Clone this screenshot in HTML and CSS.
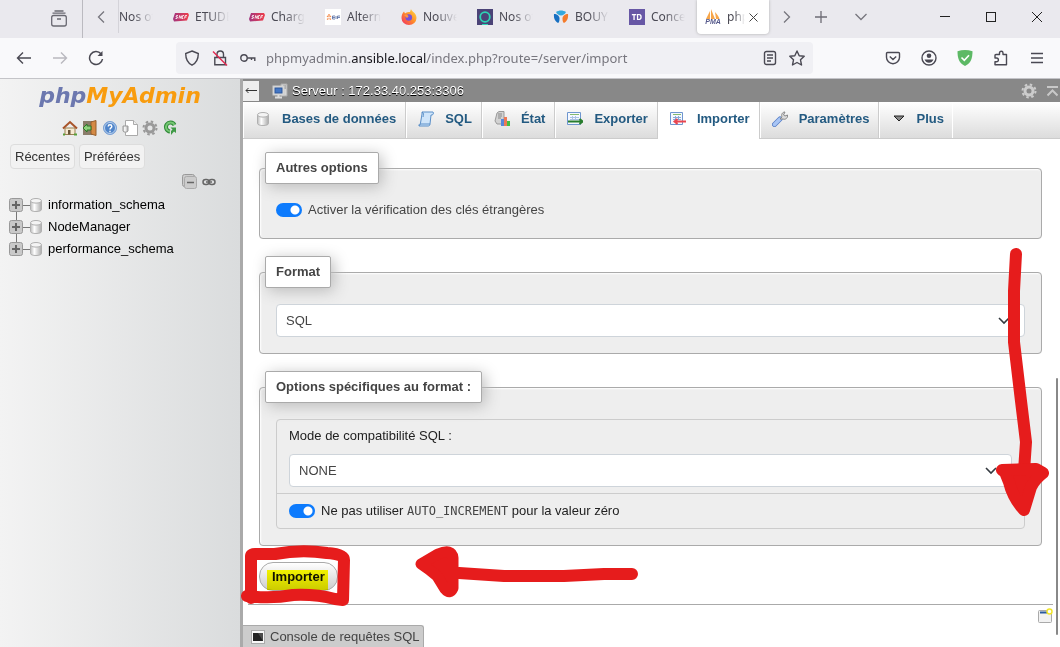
FILE: index.html
```html
<!DOCTYPE html>
<html lang="fr">
<head>
<meta charset="utf-8">
<title>phpMyAdmin</title>
<link rel="stylesheet" href="styles.css">
</head>
<body>
<svg class="defs" aria-hidden="true">
  <defs>
    <linearGradient id="sncf"><stop offset="0" stop-color="#a2357f"/><stop offset="1" stop-color="#ef3e4a"/></linearGradient>
    <linearGradient id="cyl"><stop offset="0" stop-color="#bbb"/><stop offset=".35" stop-color="#fff"/><stop offset="1" stop-color="#aaa"/></linearGradient>
    <linearGradient id="fox" x1="1" y1="0" x2="0" y2="1"><stop offset="0" stop-color="#ffe145"/><stop offset=".5" stop-color="#ff8a2a"/><stop offset="1" stop-color="#f0286a"/></linearGradient>
  </defs>
  <symbol id="i-sncf" viewBox="0 0 16 16"><path d="M2 4h13l1 2-2 5.500L1 12.500 0 10z" fill="url(#sncf)"/><path d="M5 6.500H3.500L3 8h1.500L4 9.500H2.500M6 9.500l.7-3L8 9.500l.7-3M11 6.500H9.700L9 9.500h1.300M11.500 9.500l.7-3h1.800M12 8h1.500" fill="none" stroke="#fff" stroke-width=".8"/></symbol>
  <symbol id="i-db" viewBox="0 0 16 16"><path d="M2.500 4v8.500c0 1.300 2.500 2 5.500 2s5.500-.7 5.500-2V4z" fill="url(#cyl)" stroke="#b0b0b0"/><ellipse cx="8" cy="3.800" rx="5.500" ry="2.300" fill="#f4f4f4" stroke="#b0b0b0"/></symbol>
  <symbol id="i-gear" viewBox="0 0 16 16"><circle cx="8" cy="8" r="6.500" fill="none" stroke="currentColor" stroke-width="2" stroke-dasharray="2.500 2.600"/><circle cx="8" cy="8" r="4" fill="none" stroke="currentColor" stroke-width="3"/></symbol>
  <symbol id="i-plus" viewBox="0 0 14 14"><rect x=".5" y=".5" width="13" height="13" rx="2" fill="#c9c9c9" stroke="#999"/><path d="M3 7h8M7 3v8" stroke="#666" stroke-width="2"/></symbol>
</svg>

<header class="browser">
  <div class="tabbar">
    <button class="bar-btn history" aria-label="Onglets récents"><svg width="18" height="18" viewBox="0 0 18 18" fill="none" stroke="#6a6972" stroke-width="1.300"><rect x="1.700" y="5.500" width="14.600" height="10.500" rx="2"/><path d="M2.500 3.200h13M4.500 1h9M7 9h4"/></svg></button>
    <button class="bar-btn scroll-left" aria-label="Défiler à gauche"><svg width="8" height="12" viewBox="0 0 8 12" fill="none" stroke="#77767e" stroke-width="1.300"><path d="M7 .5L1.500 6 7 11.500"/></svg></button>
    <nav class="tabs">
      <div class="tab first"><span>Nos of</span></div>
      <div class="tab"><svg width="16" height="16"><use href="#i-sncf"/></svg><span>ETUDE</span></div>
      <div class="tab"><svg width="16" height="16"><use href="#i-sncf"/></svg><span>Charg</span></div>
      <div class="tab"><svg width="16" height="16" viewBox="0 0 16 16"><rect width="16" height="16" fill="#fff"/><path d="M4 5v2M2 7l1.500 1M6 7L4.500 8M2 10.500L3.500 9.500M6 10.500L4.500 9.500" stroke="#f58a4a" stroke-width="1.300"/><path d="M7.500 7v3M7.500 7H10M7.500 8.500H10M7.500 10H10M11 7v3M12.500 7v3M12.500 7H15M12.500 8.500H15" stroke="#52689f" stroke-width=".8"/></svg><span>Altern</span></div>
      <div class="tab"><svg width="16" height="16" viewBox="0 0 16 16"><path d="M10 0c.5 2.500 5.500 4 5.500 9A7.500 7 0 0 1 .5 9C.5 6 1.500 4 3 2.500l1 2C5 3 8 3 9 3z" fill="url(#fox)"/><circle cx="7.800" cy="8.500" r="3.300" fill="#7651d8"/><path d="M3 6c3-1.500 4 0 4.500 1.500L6 9z" fill="#ff9640"/></svg><span>Nouve</span></div>
      <div class="tab"><svg width="16" height="16" viewBox="0 0 16 16"><rect width="16" height="16" fill="#4b4377"/><circle cx="8" cy="8" r="4.800" fill="none" stroke="#2dd4b4" stroke-width="1.800"/><path d="M5 15.500h6" stroke="#2dd4b4"/></svg><span>Nos of</span></div>
      <div class="tab"><svg width="16" height="16" viewBox="0 0 16 16"><path d="M3 3c3-2 7-2 10 0-1 2-3 3.500-5 3.500S4 5 3 3z" fill="#34a8dc"/><path d="M1 5c3 0 5.500 2 5.500 4.500C6.500 12 6 13.500 5 14 2 12.500.5 9 1 5z" fill="#176fc1"/><path d="M15 5c-3 0-5.500 2-5.500 4.500 0 2.500.5 4 1.500 4.500C14 12.500 15.500 9 15 5z" fill="#f47b2b"/></svg><span>BOUY</span></div>
      <div class="tab"><svg width="16" height="16" viewBox="0 0 16 16"><rect width="16" height="16" fill="#6757a5"/><text x="8" y="11" text-anchor="middle" class="fav-td">TD</text></svg><span>Conce</span></div>
      <div class="tab active"><svg width="16" height="16" viewBox="0 0 16 16"><path d="M1 10L5 2v8zM6 10V0l4 10zM10 3c2 2 4 5 4.500 7H11z" fill="#f7a64a"/><text x="8" y="15" text-anchor="middle" class="fav-pma">PMA</text></svg><span class="short">php</span><button class="close" aria-label="Fermer l'onglet"><svg width="9" height="9" viewBox="0 0 9 9" stroke="#444"><path d="M.5.5l8 8M8.500.5l-8 8"/></svg></button></div>
    </nav>
    <button class="bar-btn scroll-right" aria-label="Défiler à droite"><svg width="8" height="12" viewBox="0 0 8 12" fill="none" stroke="#77767e" stroke-width="1.300"><path d="M1 .5L6.500 6 1 11.500"/></svg></button>
    <button class="bar-btn" aria-label="Nouvel onglet"><svg width="12" height="12" viewBox="0 0 12 12" stroke="#6d6c75" stroke-width="1.300"><path d="M6 0v12M0 6h12"/></svg></button>
    <button class="bar-btn" aria-label="Lister les onglets"><svg width="12" height="8" viewBox="0 0 12 8" fill="none" stroke="#77767e" stroke-width="1.300"><path d="M.5 1L6 6.500 11.500 1"/></svg></button>
    <div class="window-controls">
      <button class="bar-btn" aria-label="Réduire"><svg width="10" height="10" viewBox="0 0 10 10" stroke="#222"><path d="M0 4.500h10"/></svg></button>
      <button class="bar-btn" aria-label="Agrandir"><svg width="10" height="10" viewBox="0 0 10 10" fill="none" stroke="#222"><rect x=".5" y=".5" width="9" height="9"/></svg></button>
      <button class="bar-btn" aria-label="Fermer"><svg width="10" height="10" viewBox="0 0 10 10" stroke="#222"><path d="M0 0l10 10M10 0L0 10"/></svg></button>
    </div>
  </div>
  <div class="toolbar">
    <div class="nav-buttons">
      <button class="bar-btn" aria-label="Page précédente"><svg width="16" height="16" viewBox="0 0 16 16" fill="none" stroke="#4a4953" stroke-width="1.400"><path d="M15 8H1.500M7 2.500L1.500 8 7 13.500"/></svg></button>
      <button class="bar-btn" aria-label="Page suivante"><svg width="16" height="16" viewBox="0 0 16 16" fill="none" stroke="#b9b8bf" stroke-width="1.400"><path d="M1 8h13.500M9 2.500L14.500 8 9 13.500"/></svg></button>
      <button class="bar-btn" aria-label="Actualiser"><svg width="16" height="16" viewBox="0 0 16 16" fill="none" stroke="#4a4953" stroke-width="1.500"><path d="M14.500 9A6.500 6.500 0 1 1 13 3.800"/><path d="M14.500 1v5h-5z" fill="#4a4953" stroke="none"/></svg></button>
    </div>
    <div class="urlbar">
      <svg width="16" height="16" viewBox="0 0 16 16" fill="none" stroke="#4a4953" stroke-width="1.400"><path d="M8 1l6.300 2.500c0 6-2 9.500-6.300 11.700C3.700 13 1.700 9.500 1.700 3.500z"/></svg>
      <svg width="16" height="16" viewBox="0 0 16 16" fill="none" stroke="#4a4953" stroke-width="1.400"><path d="M5 7V4.300a3 3 0 0 1 6.500 0V7M2.800 7.500h10.700v7.300H2.800z"/><path d="M1 1.500l14 14" stroke="#e22850"/></svg>
      <svg width="16" height="16" viewBox="0 0 16 16" fill="none" stroke="#4a4953" stroke-width="1.400"><circle cx="4" cy="8" r="3.200"/><path d="M7.200 8H15.500M11.500 8v2M14.800 8v3"/></svg>
      <div class="url">phpmyadmin.<b>ansible.local</b>/index.php?route=/server/import</div>
      <svg width="14" height="16" viewBox="0 0 14 16" fill="none" stroke="#4a4953" stroke-width="1.400"><rect x="1.500" y="1.500" width="11" height="13" rx="2"/><path d="M4 5h6M4 8h6M4 11h4"/></svg>
      <svg width="16" height="16" viewBox="0 0 16 16" fill="none" stroke="#4a4953" stroke-width="1.400"><path d="M8 1l2.200 4.700 5 .6-3.700 3.500 1 5.200L8 12.500 3.500 15l1-5.200L.8 6.300l5-.6z" stroke-linejoin="round"/></svg>
    </div>
    <div class="tools">
      <svg width="16" height="16" viewBox="0 0 16 16" fill="none" stroke="#4a4953" stroke-width="1.400"><path d="M2.500 2.500h11a1 1 0 0 1 1 1v3.700a6.500 6.500 0 0 1-13 0V3.500a1 1 0 0 1 1-1zM4.800 6.500L8 9.500l3.200-3"/></svg>
      <svg width="16" height="16" viewBox="0 0 16 16"><circle cx="8" cy="8" r="7" fill="none" stroke="#4a4953" stroke-width="1.400"/><circle cx="8" cy="5.800" r="2.300" fill="#4a4953"/><path d="M3.500 9.500h9c-.8 2-2.500 3.300-4.500 3.300S4.300 11.500 3.500 9.500z" fill="#4a4953"/></svg>
      <svg width="16" height="16" viewBox="0 0 16 16"><path d="M8 0c2.500 0 5 .4 7.500 1.300 0 7-1.500 12-7.500 14.700C2 13.300.5 8.300.5 1.300 3 .4 5.500 0 8 0z" fill="#5db965"/><path d="M4.500 7.500L7.300 10.300 12 5.200" fill="none" stroke="#fff" stroke-width="1.600"/></svg>
      <svg width="16" height="16" viewBox="0 0 16 16" fill="none" stroke="#4a4953" stroke-width="1.400"><path d="M2 8V5.500Q2 4.500 3 4.500h3.500V3a1.500 1.500 0 0 1 3.500 0v1.500h3.500v10.300H2v-3h1.500a1.800 1.800 0 0 0 0-3.800z" stroke-linejoin="round"/></svg>
      <svg width="16" height="16" viewBox="0 0 16 16" stroke="#4a4953" stroke-width="1.300"><path d="M2 3.500h12M2 8h12M2 12.500h12"/></svg>
    </div>
  </div>
</header>

<div class="page">
  <aside class="sidebar">
    <a class="logo" href="#"><span>php</span>MyAdmin</a>
    <div class="shortcuts">
      <svg width="16" height="16" viewBox="0 0 16 16"><path d="M3 8h10v6.500H3z" fill="#f6ead2" stroke="#9a8152"/><path d="M1 8.500L8 2l7 6.500" fill="none" stroke="#a8542a" stroke-width="2"/><path d="M6 10h2.500v4.500H6z" fill="#695438"/><path d="M1 14.500h2M12 14.500h3" stroke="#58a03a" stroke-width="2"/></svg>
      <svg width="16" height="16" viewBox="0 0 16 16"><path d="M1 1h9v14H1z" fill="#8a7c6a"/><path d="M9 2l5-1.500v15L9 14z" fill="#d58a45" stroke="#97602d"/><path d="M9 6v4H5v2L1 8l4-4v2z" fill="#8fd07c" stroke="#2d7827"/></svg>
      <svg width="16" height="16" viewBox="0 0 16 16"><circle cx="8" cy="8" r="6.500" fill="#5085ca" stroke="#7ba2d6"/><circle cx="8" cy="8" r="5.500" fill="none" stroke="#dce8f7" stroke-width=".8"/><path d="M6.200 6.500c0-2.300 3.600-2.300 3.600 0C9.800 8 8 7.800 8 9.500M8 10.800v1.400" fill="none" stroke="#fff" stroke-width="1.400"/></svg>
      <svg width="16" height="16" viewBox="0 0 16 16"><path d="M3.500.5h8l4 4v11h-12z" fill="#fff" stroke="#aaa"/><path d="M11.500.5v4h4" fill="#eee" stroke="#aaa"/><path d="M1 6v5c0 1.500 5 1.500 5 0V6z" fill="url(#cyl)" stroke="#999"/></svg>
      <svg width="16" height="16" class="gear-dark"><use href="#i-gear"/></svg>
      <svg width="16" height="16" viewBox="0 0 16 16"><path d="M12.500 5A4.500 4.500 0 1 0 8 11.500" fill="none" stroke="#328b3b" stroke-width="4"/><path d="M12.500 5A4.500 4.500 0 1 0 8 11.500" fill="none" stroke="#75c673" stroke-width="2"/><path d="M8.500 7.500H14V13l-2-1.500L9 15v-4l1.500-1.500z" fill="#3f9a46"/></svg>
    </div>
    <div class="side-buttons"><button>Récentes</button><button>Préférées</button></div>
    <div class="tree-tools">
      <svg width="15" height="15" viewBox="0 0 15 15"><rect x=".5" y=".5" width="12" height="12" rx="2" fill="#ccc" stroke="#999"/><rect x="2.500" y="2.500" width="12" height="12" rx="2" fill="#ccc" stroke="#aaa"/><path d="M5 8.500h7" stroke="#666" stroke-width="1.500"/></svg>
      <svg width="14" height="8" viewBox="0 0 14 8" fill="none" stroke="#666" stroke-width="1.500"><rect x="1" y="1.500" width="6" height="5" rx="2.500"/><rect x="7" y="1.500" width="6" height="5" rx="2.500"/><path d="M4 4h6"/></svg>
    </div>
    <ul class="tree">
      <li><svg class="expand" width="14" height="14"><use href="#i-plus"/></svg><svg width="16" height="16"><use href="#i-db"/></svg><a href="#">information_schema</a></li>
      <li><svg class="expand" width="14" height="14"><use href="#i-plus"/></svg><svg width="16" height="16"><use href="#i-db"/></svg><a href="#">NodeManager</a></li>
      <li><svg class="expand" width="14" height="14"><use href="#i-plus"/></svg><svg width="16" height="16"><use href="#i-db"/></svg><a href="#">performance_schema</a></li>
    </ul>
  </aside>

  <main class="main">
    <div class="server-bar">
      <button class="collapse" aria-label="Masquer le panneau"><svg width="12" height="7" viewBox="0 0 12 7" fill="none" stroke="#333"><path d="M12 3.500H1M3.500 1L1 3.500 3.500 6"/></svg></button>
      <svg width="16" height="16" viewBox="0 0 16 16"><path d="M9 1h6v12H9z" fill="#d6d6d6" stroke="#aaa"/><path d="M11 3h3M11 5h3" stroke="#888"/><rect x="1" y="3" width="11" height="9" fill="#ddd" stroke="#ccc"/><rect x="3" y="5" width="7" height="5" fill="#4477c5" stroke="#2d5799"/><path d="M3 14.500h7M6.500 12v2" stroke="#ddd" stroke-width="2"/></svg>
      <span class="server-name">Serveur : 172.33.40.253:3306</span>
      <svg width="16" height="16" class="gear-light"><use href="#i-gear"/></svg>
      <svg class="to-top" width="11" height="12" viewBox="0 0 11 12" fill="none" stroke="#c8c8c8" stroke-width="2"><path d="M0 2h11M.5 10.500l5-5 5 5"/></svg>
    </div>
    <nav class="menu">
      <a href="#"><svg width="16" height="16"><use href="#i-db"/></svg>Bases de données</a>
      <a href="#"><svg width="16" height="16" viewBox="0 0 16 16"><path d="M4 1h11c1 1 0 3-1 3h-1l-1 9c0 1.500-1 2-2 2H1c1-1 1.500-2 1.500-3L4 3z" fill="#cfe5fa" stroke="#5a8fc8"/><path d="M4 1c2 1 1.500 3 1 5M1 15c-.5-2 1-2 2-2h9" fill="none" stroke="#5a8fc8"/></svg>SQL</a>
      <a href="#"><svg width="16" height="16" viewBox="0 0 16 16"><path d="M3 2l2-1.500h5V13H3L1 10z" fill="#d2d2d2" stroke="#999"/><path d="M4 3h4M4 5h4M4 7h3" stroke="#888"/><path d="M7 8h3v7H7z" fill="#5887da"/><path d="M10 6h3v9h-3z" fill="#ed7956"/><path d="M13 10h3v5h-3z" fill="#45bd42"/></svg>État</a>
      <a href="#"><svg width="16" height="16" viewBox="0 0 16 16"><path d="M.5 1.500h13v12H.5z" fill="#f4f8ff" stroke="#6e96cf"/><path d="M3 3.500h9" stroke="#84b96e"/><path d="M3 6.500h9M3 8.500h9M5.500 5v4M8.500 5v4" stroke="#a9c2e4"/><path d="M1 10.500h13M12.500 8l3 2.500-3 2.500" fill="none" stroke="#287d2e" stroke-width="2"/></svg>Exporter</a>
      <a href="#" class="current"><svg width="16" height="16" viewBox="0 0 16 16"><path d="M.5 1.500h12v12H.5z" fill="#f4f8ff" stroke="#6e96cf"/><path d="M3 3.500h8" stroke="#84b96e"/><path d="M3 6.500h8M3 8.500h8M5.500 5v4M8.500 5v4" stroke="#88a8d5"/><path d="M16 10.500H5M7.500 8l-3 2.500 3 2.500" fill="none" stroke="#e94650" stroke-width="2"/></svg>Importer</a>
      <a href="#"><svg width="16" height="16" viewBox="0 0 16 16"><path d="M2.500 13.500L8 8" stroke="#587fc6" stroke-width="5" stroke-linecap="round"/><path d="M2.500 13.500L8 8" stroke="#a8c5f5" stroke-width="3.500" stroke-linecap="round"/><path d="M8 8l2-2c-1-2 0-5 3-5l-1.500 3L13 5l2.500-1c.5 3-2 5-4.500 4z" fill="#ddd" stroke="#888"/></svg>Paramètres</a>
      <a href="#" class="more"><svg width="12" height="8" viewBox="0 0 12 8"><path d="M1 1h10L6 6z" fill="#888" stroke="#222"/></svg>Plus</a>
    </nav>

    <form class="content">
      <fieldset>
        <legend>Autres options</legend>
        <div class="option"><input type="checkbox" class="switch" id="fk" checked><label for="fk">Activer la vérification des clés étrangères</label></div>
      </fieldset>
      <fieldset>
        <legend>Format</legend>
        <select aria-label="Format"><option>SQL</option></select>
      </fieldset>
      <fieldset>
        <legend>Options spécifiques au format :</legend>
        <div class="card">
          <div class="card-item">
            <label for="compat">Mode de compatibilité SQL :</label>
            <select id="compat"><option>NONE</option></select>
          </div>
          <div class="card-item option">
            <input type="checkbox" class="switch" id="zero" checked><label for="zero">Ne pas utiliser <code>AUTO_INCREMENT</code> pour la valeur zéro</label>
          </div>
        </div>
      </fieldset>
      <div class="submit">
        <button type="button" class="go">Importer<span class="marker"></span></button>
        <svg class="mark frame" width="112" height="64" viewBox="0 0 112 64" fill="none" stroke="#e61c1c" stroke-width="12" stroke-linejoin="round" stroke-linecap="round"><path d="M10 54V12Q10 10 14 10H34Q60 5 86 9Q103 10 103 16L102 56 94 55Q75 50 52 51Q30 55 6 52"/></svg>
        <svg class="mark left" width="224" height="56" viewBox="0 0 224 56" fill="#e61c1c" stroke="#e61c1c" stroke-linejoin="round" stroke-linecap="round"><path d="M45 29L90 32 150 32 190 30 218 30" fill="none" stroke-width="12"/><path d="M7 20L24 10Q38 4 39 14V44Q36 51 31 45L23 32Q16 26 7 20z" stroke-width="11"/></svg>
      </div>
    </form>
    <footer class="footer"><svg width="16" height="16" viewBox="0 0 16 16"><rect x="1.500" y="2.500" width="13" height="12" rx="1" fill="#f2f2f2" stroke="#aaa"/><path d="M3 4.500h8" stroke="#2a5a9e" stroke-width="2"/><circle cx="12.500" cy="3.500" r="2.500" fill="#fff" stroke="#f1e52c" stroke-width="1.500"/></svg></footer>
    <button class="console"><svg width="14" height="14" viewBox="0 0 14 14"><rect x=".5" y=".5" width="13" height="13" fill="#f7f7f7" stroke="#aaa"/><path d="M2 3h10v8H2z" fill="#222"/><path d="M2 3h5l5 8V3z" fill="#4b4b4b"/></svg>Console de requêtes SQL</button>
    <svg class="mark down" width="58" height="274" viewBox="0 0 58 274" fill="#e61c1c" stroke="#e61c1c" stroke-linejoin="round" stroke-linecap="round"><path d="M25 8L23 45 23 96 30 155 35 196 33 225" fill="none" stroke-width="12"/><path d="M11 224L45 223 52 227Q44 233 40 241L33 264Q22 252 18 236L14 226z" stroke-width="12"/></svg>
    <div class="scroll-thumb"></div>
  </main>
</div>
</body>
</html>
```
FILE: styles.css
```css
* { box-sizing: border-box; }
html, body { height: 100%; margin: 0; }
body {
  display: flex;
  flex-direction: column;
  overflow: hidden;
  background: #fff;
  color: #444;
  font: 13px/20px "Liberation Sans", Arial, sans-serif;
}
button, select { font: inherit; color: inherit; }
a { color: inherit; text-decoration: none; }
svg { display: block; flex: none; }
.defs { position: absolute; width: 0; height: 0; }

/* Browser chrome */
.browser {
  flex: none;
  background: #f9f9fb;
  border-bottom: 1px solid #c4c4c8;
  font-family: "Noto Sans", sans-serif;
}
.tabbar { display: flex; height: 38px; background: #eae9ee; padding-bottom: 5px; }
.bar-btn { display: grid; place-items: center; border: 0; padding: 0; background: none; width: 40px; }
.history { width: 83px; padding-left: 36px; margin-bottom: -5px; border-right: 1px solid #bbbac0; }
.scroll-left { width: 36px; border-right: 1px solid #d4d3d9; }
.tabs { display: flex; }
.tab {
  display: flex;
  align-items: center;
  gap: 6px;
  width: 76px;
  padding: 0 10px;
  font-size: 12px;
  color: #4a4953;
}
.tab span {
  width: 34px;
  overflow: hidden;
  white-space: nowrap;
  -webkit-mask-image: linear-gradient(90deg, #000 40%, transparent);
  mask-image: linear-gradient(90deg, #000 40%, transparent);
}
.tab.first { width: 44px; padding: 0; }
.tab.active {
  width: 72px;
  height: 34px;
  margin: 0 4px 0 2px;
  padding: 0 8px;
  background: #fff;
  border-radius: 0 0 4px 4px;
  box-shadow: 0 0 3px #aaa;
}
.tab .short { width: 18px; }
.close { border: 0; padding: 0; background: none; margin-left: -2px; }
.fav-td { font: bold 8px "Noto Sans", sans-serif; fill: #fff; }
.fav-pma { font: italic bold 7px "Liberation Sans", sans-serif; fill: #55598b; }
.scroll-right { width: 28px; }
.window-controls { display: flex; margin-left: auto; }
.window-controls .bar-btn { width: 46px; }
.toolbar { display: flex; align-items: center; height: 40px; }
.nav-buttons { display: flex; width: 176px; padding-left: 6px; }
.nav-buttons .bar-btn { width: 36px; }
.urlbar {
  flex: 1;
  display: flex;
  align-items: center;
  gap: 12px;
  height: 32px;
  padding: 0 8px;
  background: #f0f0f4;
  border-radius: 4px;
}
.url { flex: 1; margin-left: -2px; font-size: 13px; color: #77767e; white-space: nowrap; }
.url b { font-weight: 400; color: #15141a; }
.tools { display: flex; gap: 20px; padding: 0 15px 0 72px; }

/* Page frame */
.page { flex: 1; display: flex; min-height: 0; }
.sidebar {
  flex: none;
  width: 243px;
  border-right: 3px solid #aaa;
  background: linear-gradient(90deg, #f3f3f3, #dadcdd);
  color: #000;
}
.logo {
  display: block;
  height: 40px;
  text-align: center;
  font: italic bold 22px/34px "DejaVu Sans", sans-serif;
  color: #f89c0e;
}
.logo span { color: #6c78af; }
.shortcuts { display: flex; justify-content: center; gap: 4px; padding-top: 1px; }
.gear-dark { color: #999; }
.gear-light { color: #ccc; }
.side-buttons { display: flex; gap: 4px; padding: 8px 10px 0; }
.side-buttons button {
  height: 25px;
  padding: 0 4px;
  background: #f2f2f2;
  border: 1px solid #ddd;
  border-radius: 4px;
  color: #333;
}
.tree-tools { display: flex; align-items: center; justify-content: flex-end; gap: 5px; padding: 5px 24px 5px; }
.tree { list-style: none; margin: 0; padding: 0 9px; }
.tree li { display: flex; align-items: center; height: 22px; }
.tree li svg + svg { margin: 0 4px 0 -3px; }
.tree .expand {
  width: 22px;
  height: 22px;
  padding: 4px 8px 4px 0;
  background:
    linear-gradient(#777, #777) 14px 11px / 8px 1px no-repeat,
    linear-gradient(#777, #777) 7px 0 / 1px 22px no-repeat;
}
.tree li:first-child .expand {
  background:
    linear-gradient(#777, #777) 14px 11px / 8px 1px no-repeat,
    linear-gradient(#777, #777) 7px 14px / 1px 8px no-repeat;
}
.tree li:last-child .expand {
  background:
    linear-gradient(#777, #777) 14px 11px / 8px 1px no-repeat,
    linear-gradient(#777, #777) 7px 0 / 1px 8px no-repeat;
}
.main { flex: 1; min-width: 0; display: flex; flex-direction: column; position: relative; }
.server-bar { display: flex; align-items: center; height: 23px; background: #888; color: #fff; }
.collapse { display: grid; place-items: center; width: 16px; height: 20px; padding: 0; border: 0; background: #eee; }
.collapse + svg { margin: 0 4px 0 13px; }
.server-name { flex: 1; text-shadow: 0 1px 0 #000; }
.gear-light { margin-right: 10px; }
.to-top { margin-right: 2px; }

/* Server menu */
.menu {
  display: flex;
  height: 37px;
  background: linear-gradient(#fff, #dcdcdc);
  border-bottom: 1px solid #ccc;
  font-weight: 700;
  color: #235a81;
}
.menu a {
  display: flex;
  align-items: center;
  gap: 11px;
  height: 36px;
  padding: 0 9px 2px 11px;
  border-left: 1px solid #fff;
  border-right: 1px solid #ccc;
  white-space: nowrap;
}
.menu .current { height: 37px; padding-bottom: 3px; background: #fff; }
.menu .more { padding: 0 8px 2px 13px; border-right-color: #fff; }

/* Import form */
.content { display: flex; flex-direction: column; gap: 17px; padding: 13px 18px 13px 16px; }
fieldset {
  min-width: 0;
  margin: 0;
  padding: 16px;
  border: 1px solid #aaa;
  border-radius: 4px;
  background: #eee;
  box-shadow: inset 1px 1px 2px #fff;
}
legend {
  margin-left: -11px;
  padding: 5px 10px;
  background: #fff;
  border: 1px solid #aaa;
  border-radius: 2px;
  box-shadow: 3px 3px 15px #bbb;
  font-weight: 700;
}
.option { display: flex; align-items: center; gap: 6px; }
fieldset > .option { padding-bottom: 2px; }
.switch {
  appearance: none;
  width: 26px;
  height: 14px;
  margin: 0;
  border-radius: 7px;
  background: radial-gradient(circle at 19px 50%, #fff 4px, #0d7bfd 5px);
}
select {
  appearance: none;
  display: block;
  width: 100%;
  height: 33px;
  padding: 0 9px;
  border: 1px solid #ced4da;
  border-radius: 4px;
  background: #fff url("data:image/svg+xml,%3Csvg xmlns='http://www.w3.org/2000/svg' viewBox='0 0 12 8'%3E%3Cpath d='M1 1l5 5 5-5' fill='none' stroke='%23343a40' stroke-width='1.6'/%3E%3C/svg%3E") right 14px center / 12px 8px no-repeat;
}
.card { border: 1px solid #ccc; border-radius: 4px; color: #222; }
.card-item { padding: 6px 12px; }
.card-item + .card-item { border-top: 1px solid #ccc; padding: 7px 12px; }
.card label { display: block; }
.card select { margin-top: 8px; color: #444; }
code { font: 12px "DejaVu Sans Mono", monospace; color: #444; }
.submit { position: relative; height: 29px; margin-top: -1px; }
.go {
  position: relative;
  height: 29px;
  padding: 0 12px;
  border: 1px solid #aaa;
  border-radius: 14px;
  background: linear-gradient(#fff, #ccc);
  color: #111;
  font-weight: 700;
}
.marker { position: absolute; inset: 7px 9px 0 7px; background: #ffff00; mix-blend-mode: multiply; }

/* Hand-drawn annotations */
.mark { position: absolute; pointer-events: none; }
.frame { left: -18px; top: -18px; }
.left { left: 155px; top: -18px; }
.down { right: 11px; top: 167px; }

.footer { display: flex; justify-content: flex-end; margin: 0 7px 0 5px; padding-top: 3px; border-top: 1px solid #aaa; }
.console {
  display: flex;
  align-items: center;
  gap: 5px;
  align-self: flex-start;
  height: 22px;
  margin-top: auto;
  padding: 0 3px 0 8px;
  border: solid #aaa;
  border-width: 1px 1px 0 0;
  border-radius: 0 3px 0 0;
  background: #ccc;
}
.scroll-thumb { position: absolute; right: 2px; top: 299px; bottom: 12px; width: 2px; background: #888; border-radius: 1px; }
```
